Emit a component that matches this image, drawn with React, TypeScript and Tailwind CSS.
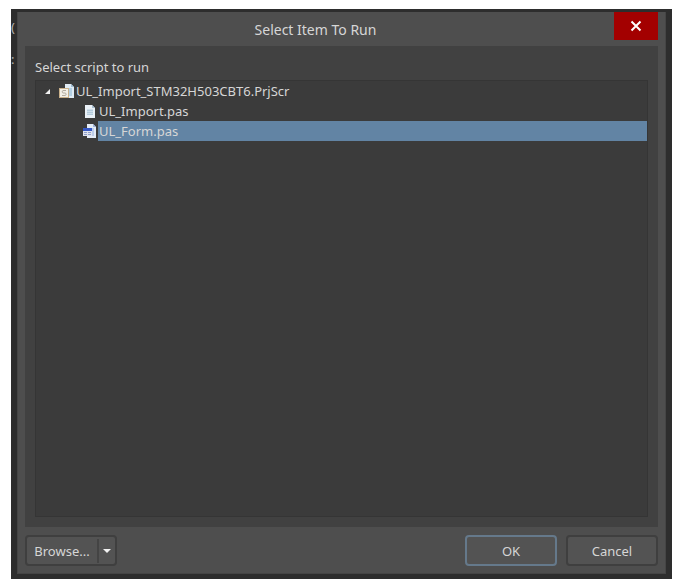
import { useState } from "react";

const ProjectIcon = () => (
  <svg className="h-4 w-4 shrink-0" viewBox="0 0 16 16">
    <path d="M6 1h6l3 3v11H6z" fill="#dfeaf3" />
    <path d="M12 1v3h3z" fill="#9fbdd4" />
    <path d="M10 5h3v8h-3z" fill="#b3cfe3" />
    <rect x="0.5" y="5.5" width="9" height="9" fill="#f3f0e8" stroke="#c9b08a" />
    <path d="M7 7.500H4C3 7.500 3 10 4 10h2c1.500 0 1.500 2.500 0 2.500H3" fill="none" stroke="#b3aca0" />
  </svg>
);

const ScriptIcon = () => (
  <svg className="h-4 w-4 shrink-0" viewBox="0 0 16 16">
    <path d="M3 2h7l3 3v10H3z" fill="#e9f0f6" />
    <path d="M10 2v3h3z" fill="#a9c1d4" />
    <path d="M5 6h6v6H5z" fill="#cfdfea" />
    <path d="M5 7.500h6M5 9.500h6M5 11.500h6" stroke="#b4cbdc" />
  </svg>
);

const FormIcon = () => (
  <svg className="h-4 w-4 shrink-0" viewBox="0 0 16 16">
    <path d="M5 1h6l3 3v11H5z" fill="#e3ebf6" />
    <path d="M11 1v3h3z" fill="#9fb4dc" />
    <path d="M10 5h2v8h-2z" fill="#bccdea" />
    <rect x="1" y="5" width="9" height="8" fill="#dfe3ee" />
    <rect x="1" y="5" width="9" height="3" fill="#3557c4" />
    <path d="M2 9.500h3M2 11.500h3M6 9.500h3M6 11.500h3" stroke="#8f9fc8" />
  </svg>
);

const files = [
  { name: "UL_Import.pas", icon: <ScriptIcon /> },
  { name: "UL_Form.pas", icon: <FormIcon /> },
];

const buttonStyle = "h-[31px] w-[92px] rounded border-2 bg-[#535353] leading-5";

const App = () => {
  const [open, setOpen] = useState(true);
  const [selected, setSelected] = useState("UL_Form.pas");

  return (
    <div className="flex h-screen bg-white pt-[9px] pr-1.5 pb-[9px] pl-[11px] font-['Noto_Sans',sans-serif] text-[13px] text-[#d6d6d6]">
      <div className="relative flex grow bg-[#2d2d2d] px-1.5 pt-[3px] pb-[5px]">
        {/* editor text behind the dialog */}
        <div className="absolute top-2 left-0 w-1.5 overflow-hidden leading-5 text-[#b0b0b0]">
          <span className="block">(</span>
          <span className="mt-3 block">:</span>
        </div>
        <div className="relative flex grow flex-col border-x border-b border-[#454545] bg-[#4e4e4e] px-[7px]">
          <header className="flex h-[34px] items-start">
            <h1 className="grow pt-2 pr-2 text-center text-sm leading-5">Select Item To Run</h1>
            <button aria-label="Close" className="flex h-7 w-11 items-center justify-center bg-[#a30000]">
              <svg className="h-3 w-3" viewBox="0 0 12 12">
                <path d="M1.500 1.500l9 9M10.500 1.500l-9 9" stroke="#fff" strokeWidth="2" />
              </svg>
            </button>
          </header>
          <main className="flex grow flex-col bg-[#414141] px-2.5 pb-2.5">
            <h2 className="pt-[11px] pb-[3px] leading-5">Select script to run</h2>
            <div className="grow border border-[#353535] bg-[#3b3b3b]">
              <ul role="tree">
                <li role="treeitem" aria-expanded={open}>
                  <div className="flex h-5 items-center">
                    <button aria-label="Toggle project" onClick={() => setOpen(!open)} className="flex h-5 w-[23px] items-center justify-center">
                      <svg className="h-[5px] w-[5px]" viewBox="0 0 5 5">
                        <path d="M5 0v5H0z" fill="#f0f0f0" />
                      </svg>
                    </button>
                    <ProjectIcon />
                    <span className="pl-px leading-5">UL_Import_STM32H503CBT6.PrjScr</span>
                  </div>
                  {open && (
                    <ul role="group">
                      {files.map((file) => (
                        <li
                          key={file.name}
                          role="treeitem"
                          aria-selected={selected === file.name}
                          onClick={() => setSelected(file.name)}
                          className="flex h-5 items-center pl-[46px]"
                        >
                          {file.icon}
                          <span className={selected === file.name ? "grow bg-[#6284a4] pl-px leading-5" : "grow pl-px leading-5"}>{file.name}</span>
                        </li>
                      ))}
                    </ul>
                  )}
                </li>
              </ul>
            </div>
          </main>
          <footer className="flex gap-[9px] pt-2 pb-[7px]">
            <div className="mr-auto flex h-[31px] w-[92px] items-center rounded border-2 border-[#3f3f3f] bg-[#535353]">
              <button className="grow leading-5">Browse...</button>
              <button aria-label="More browse options" className="flex h-6 w-[18px] items-center justify-center border-l-2 border-[#444444]">
                <svg className="h-1 w-2" viewBox="0 0 8 4">
                  <path d="M0 0h8L4 4z" fill="#f2f2f2" />
                </svg>
              </button>
            </div>
            <button className={`${buttonStyle} border-[#65798b]`}>OK</button>
            <button className={`${buttonStyle} border-[#3f3f3f]`}>Cancel</button>
          </footer>
        </div>
      </div>
    </div>
  );
};

export default App;
